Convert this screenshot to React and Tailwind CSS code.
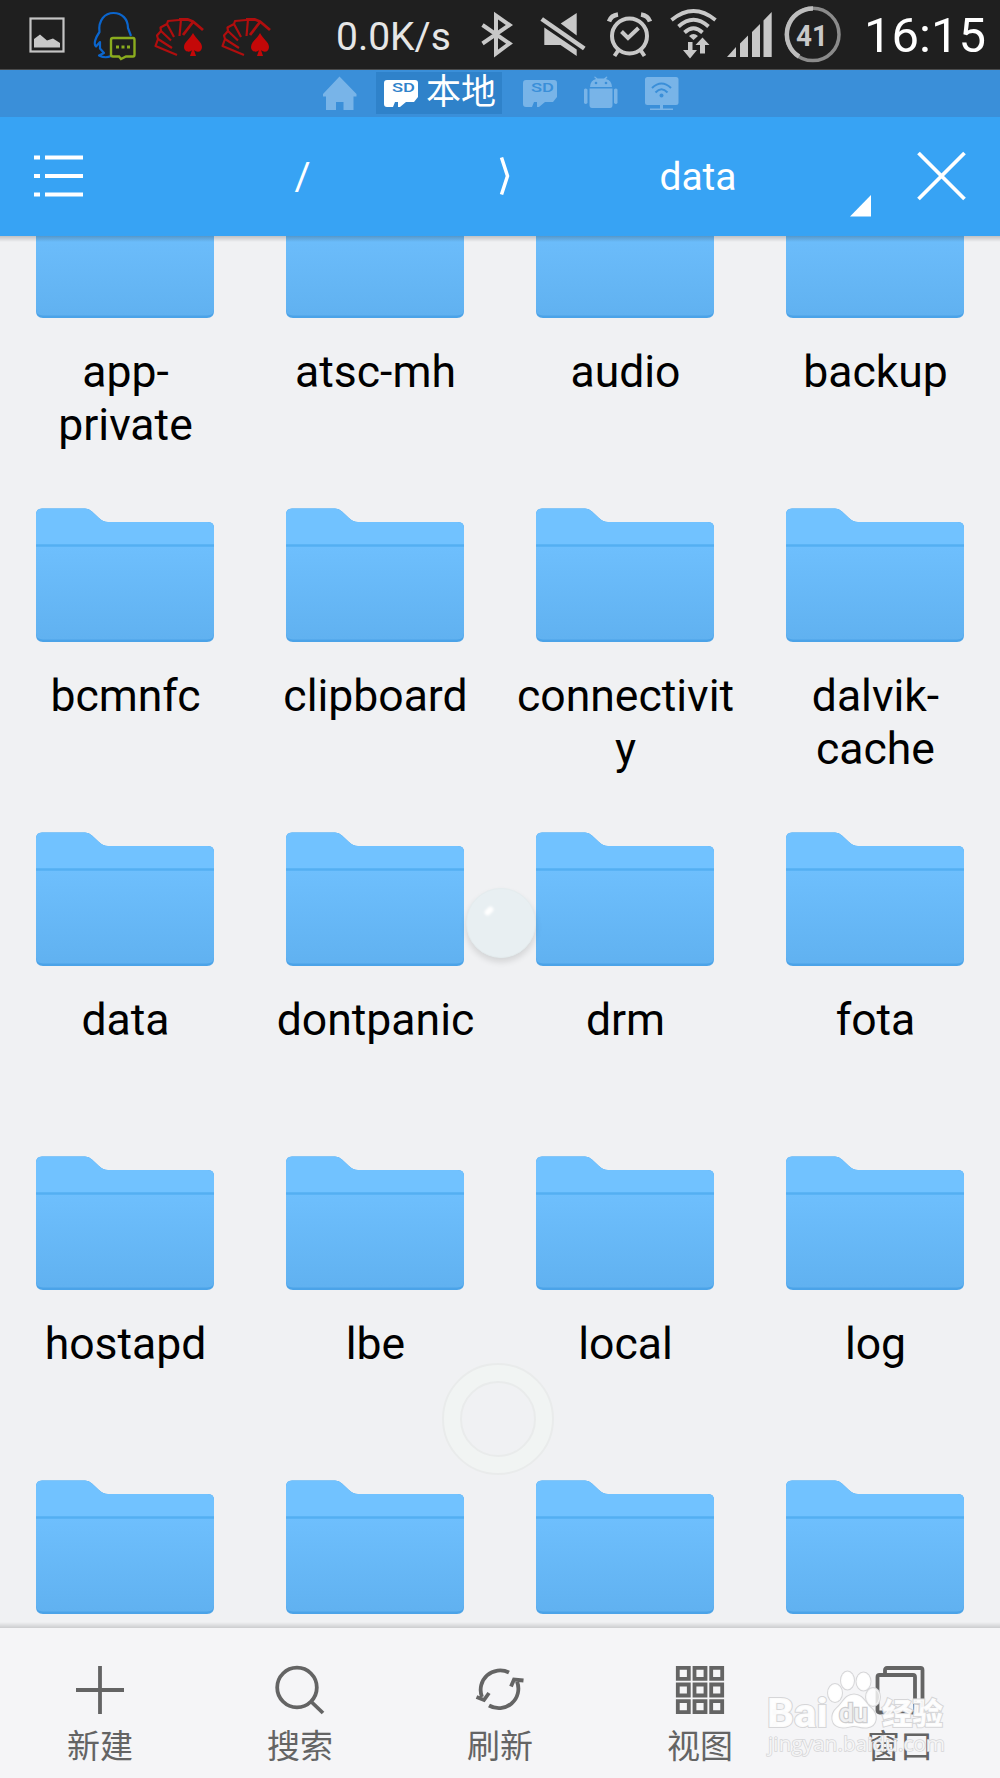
const rows = [
  ["app-private", "atsc-mh", "audio", "backup"],
  ["bcmnfc", "clipboard", "connectivity", "dalvik-cache"],
  ["data", "dontpanic", "drm", "fota"],
  ["hostapd", "lbe", "local", "log"],
  ["", "", "", ""],
];

function CardsIcon({ className }) {
  return (
    <svg className={className} width="52" height="69" viewBox="154 0 52 69" fill="none" stroke="#b00e0e" strokeWidth="2.200" strokeLinejoin="round">
      <path d="M203 30 193 21.500 188 19.500H179M193 22 183 35" strokeWidth="2.800" />
      <path d="M181 19.500 179.500 36M179 20 168 21 167 24 174 37M167 24 160.500 27.500 161 31 171 40.500M161 31 157 35.500 158 39 172 48M158 39 155.500 46 177 55" />
      <path d="M193 33C190 39 184 42 184 47 184 52 190 53 192 50L190 56H196L194 50C197 53 202 52 202 47 202 42 196 39 193 33Z" fill="#c40808" stroke="none" />
    </svg>
  );
}

function StatusBar() {
  return (
    <div className="flex h-[70px] border-b border-[#4a4a4a] bg-[#1f1f1f] text-[#e6e6e6]">
      <svg className="ml-[28px]" width="38" height="69" viewBox="28 0 38 69">
        <rect x="30.5" y="18.5" width="33" height="33" fill="none" stroke="#c4c4c4" strokeWidth="2.2" />
        <path d="M34 47.5V39L40 34.5 47 40.5 53 38.5 60 43V47.5Z" fill="#c8c8c8" />
      </svg>
      <svg className="ml-[26px]" width="46" height="69" viewBox="92 0 46 69" fill="none">
        <path d="M111 56C107 58 102 57 99 55.500L104 53 100 48.500V42L96 46.500C93 44 96 37 99.500 32C98 20 105 13 113.500 13C122 13 128 19 128 28L131 36" stroke="#0b65cc" strokeWidth="2.200" strokeLinejoin="round" />
        <path d="M113 38H133Q134.500 38 134.500 40V54.500Q134.500 56.500 133 56.500H126L121 59 119 56.500H113Q111 56.500 111 54.500V40Q111 38 113 38Z" stroke="#8aac1e" strokeWidth="2.400" fill="#1f1f1f" />
        <path d="M116 47h3M121.500 47h3M127 47h3" stroke="#8aac1e" strokeWidth="3" />
      </svg>
      <CardsIcon className="ml-[16px]" />
      <CardsIcon className="ml-[15px]" />
      <span className="ml-[63px] w-[119px] text-[39px] leading-[74px]">0.0K/s</span>
      <svg className="ml-[25px]" width="34" height="69" viewBox="480 0 34 69">
        <path d="M482.500 25 509.500 43.500 496 53.500V15.500L509.500 25 482.500 43.500" fill="none" stroke="#c8c8c8" strokeWidth="4" />
      </svg>
      <svg className="ml-[26px]" width="46" height="69" viewBox="540 0 46 69" fill="#c8c8c8">
        <path d="M560.700 23.500 576.700 13V35.500ZM544.300 27.500 576.700 49.500V56L560.500 45H544.300Z" />
        <path d="M541.700 19 584.300 48.500" stroke="#c8c8c8" strokeWidth="4.500" />
      </svg>
      <svg className="ml-[21px]" width="46" height="69" viewBox="607 0 46 69" fill="none" stroke="#c8c8c8" strokeWidth="4">
        <circle cx="629.500" cy="36" r="17.500" />
        <path d="M621.500 31.500 628 38 638.500 28M618.500 50 614.500 56M640.500 50 644.500 56" />
        <path d="M609 21.500Q611 15.500 618 14.500M650 21.500Q648 15.500 641 14.500" strokeWidth="4.500" />
      </svg>
      <svg className="ml-[17px]" width="48" height="69" viewBox="670 0 48 69" fill="#c8c8c8">
        <path d="M671.500 20Q693.500 2 715.500 20M678.500 26.500Q693.500 13 708.500 26.500M684.500 32.500Q693.500 24 702.500 32.500" fill="none" stroke="#c8c8c8" strokeWidth="3.800" />
        <path d="M689 36Q693.500 32 698 36L693.500 40ZM688 42H692.500V50H697L690 58.500 683 50H688ZM702.500 37.500 709.500 45H705V53.500H700V45H695.500Z" />
      </svg>
      <svg className="ml-[8px]" width="48" height="69" viewBox="726 0 48 69" fill="#c8c8c8">
        <path d="M727 57H736V47ZM740 57H748V35.500L740 43.500ZM752 57H760V24L752 32ZM763.500 57H771.700V12L763.500 20.500Z" />
      </svg>
      <svg className="ml-[10px]" width="58" height="69" viewBox="784 0 58 69" fill="none">
        <circle cx="812.800" cy="34.400" r="26.200" stroke="#8b8b8b" strokeWidth="3.500" />
        <path d="M813 8.500A26 26 0 0 0 799 56.500" stroke="#bdbdbd" strokeWidth="4.500" />
        <text x="796" y="45.500" textLength="32" lengthAdjust="spacingAndGlyphs" fontSize="30" fontWeight="700" fill="#c8c8c8">41</text>
      </svg>
      <span className="ml-[22px] text-[49px] leading-[71px] text-white">16:15</span>
    </div>
  );
}

function SdIcon({ color, label }) {
  return (
    <svg width="34" height="47" viewBox="384 70 34 47">
      <path d="M387 80H415Q418 80 418 83V97L414 102H406L400 107H398V102H395L393 107H387Q384 107 384 104V83Q384 80 387 80Z" fill={color} />
      <text x="392" y="92" textLength="23" lengthAdjust="spacingAndGlyphs" fontSize="12" fontWeight="500" fill={label}>SD</text>
    </svg>
  );
}

function TabStrip() {
  return (
    <div className="flex h-[47px] bg-[#3a8fd9]">
      <svg className="ml-[322px]" width="35" height="47" viewBox="322 70 35 47">
        <path d="M339.500 76.500 356.500 94V96.500H353.500V110H343.500V102H336V110H326V96.500H323V94Z" fill="#78b4e8" />
      </svg>
      <div className="mt-[2px] ml-[19px] flex h-[42px] w-[126px] items-start bg-[#2f82ca] pl-[8px]">
        <div className="-mt-[2px]">
          <SdIcon color="#ffffff" label="#2f82ca" />
        </div>
        <span className="ml-[8px] text-[35px] leading-[42px] text-white">本地</span>
      </div>
      <div className="ml-[21px]">
        <SdIcon color="#78b4e8" label="#3a8fd9" />
      </div>
      <svg className="ml-[26px]" width="35" height="47" viewBox="583 70 35 47" fill="#78b4e8">
        <path d="M590 87Q590.500 80 596 79L594 77 595 76.500 597.500 78.500H604L606.500 76.500 607.500 77 606 79Q611.500 80 612 87ZM589.500 88.500H612.500V105Q612.500 108 610 108H592Q589.500 108 589.500 105ZM584 89.500Q585.500 87.500 587.500 89.500V103Q585.500 105 584 103ZM614 89.500Q616 87.500 617.500 89.500V103Q616 105 614 103Z" />
        <circle cx="596" cy="83" r="1.300" fill="#3a8fd9" />
        <circle cx="606" cy="83" r="1.300" fill="#3a8fd9" />
      </svg>
      <svg className="ml-[27px]" width="34" height="47" viewBox="645 70 34 47">
        <path d="M647.500 77H676Q678.500 77 678.500 79.500V102.500Q678.500 105 676 105H663V108.500H673V110H650V108.500H660V105H647.500Q645 105 645 102.500V79.500Q645 77 647.500 77Z" fill="#78b4e8" />
        <path d="M652 88Q661.500 79 671 88M655.500 92.500Q661.500 86 667.500 92.500" fill="none" stroke="#3a8fd9" strokeWidth="2" />
        <circle cx="661.500" cy="95.500" r="2" fill="#3a8fd9" />
      </svg>
    </div>
  );
}

function PathBar() {
  return (
    <div className="flex h-[119px] items-center bg-[#37a3f4] text-[39px] text-white">
      <svg width="118" height="119" viewBox="0 117 118 119" stroke="#fff" strokeWidth="4.200">
        <path d="M34 157.500h6M45 157.500h38M34 176h6M45 176h38M34 194.500h6M45 194.500h38" />
      </svg>
      <span className="w-[368px] pt-[2px] pl-[1px] text-center">/</span>
      <svg width="40" height="119" viewBox="486 117 40 119" fill="none" stroke="#fff" strokeWidth="3.500">
        <path d="M501.500 157.500 507.500 176 501.500 194.500" />
      </svg>
      <span className="w-[324px] pt-[2px] pl-[20px] text-center">data</span>
      <svg width="21" height="119" viewBox="850 117 21 119">
        <path d="M850 216.500H871V195Z" fill="#fff" />
      </svg>
      <svg width="129" height="119" viewBox="871 117 129 119" stroke="#fff" strokeWidth="3.800">
        <path d="M918.500 153 964.500 199M964.500 153 918.500 199" />
      </svg>
    </div>
  );
}

function Folder({ name }) {
  return (
    <div className="flex h-[324px] flex-col items-center">
      <svg width="178" height="134" viewBox="0 0 178 134" className="shrink-0">
        <defs>
          <linearGradient id="front" x1="0" y1="38" x2="0" y2="134" gradientUnits="userSpaceOnUse">
            <stop offset="0" stopColor="#6ebffd" />
            <stop offset="1" stopColor="#60b1f0" />
          </linearGradient>
        </defs>
        <path d="M0 6.500Q0 .500 6 .500H49Q53 .500 56 3.500L63 10Q67 14 72 14H172Q178 14 178 20V127Q178 134 171 134H7Q0 134 0 127Z" fill="#4ba3e8" />
        <path d="M0 6.500Q0 .500 6 .500H49Q53 .500 56 3.500L63 10Q67 14 72 14H172Q178 14 178 20V40H0Z" fill="#71c2ff" />
        <path d="M0 37H178V125Q178 131.500 171 131.500H7Q0 131.500 0 125Z" fill="url(#front)" />
        <path d="M0 37.500H178" stroke="#54aff2" strokeWidth="2.500" />
      </svg>
      <span className="mt-[28px] w-[219px] pl-[1px] text-center text-[44.5px] leading-[53px] break-words">{name}</span>
    </div>
  );
}

function FileGrid() {
  return (
    <div className="relative h-[1392px] overflow-hidden bg-[#f0f1f3]">
      <div className="-mt-[52px] grid grid-cols-4">
        {rows.flat().map((name, i) => (
          <Folder key={i} name={name} />
        ))}
      </div>
      <div className="absolute inset-x-0 top-0 h-[6px] bg-linear-to-b from-black/20 to-transparent" />
      <div className="absolute inset-x-0 bottom-0 h-[6px] bg-linear-to-b from-transparent to-black/15" />
      {/* floating assistant ball */}
      <div className="absolute top-[652px] left-[466px] size-[70px] rounded-full border border-[#e4ecee] bg-[#e8eff2] shadow-[0_4px_6px_rgba(0,0,0,0.12)]">
        <div className="mt-[19px] ml-[17px] h-[6px] w-[10px] -rotate-45 rounded-full bg-white blur-[1px]" />
      </div>
      <div className="absolute top-[1127px] left-[442px] size-[112px] rounded-full border-2 border-[#e9ebeb] bg-[#f1f4f3] p-[16px]">
        <div className="size-full rounded-full border-2 border-[#e9ebeb] bg-[#f0f1f3]" />
      </div>
    </div>
  );
}

const actions = [
  { label: "新建", icon: <path d="M24 0V48M0 24H48" /> },
  {
    label: "搜索",
    icon: (
      <>
        <circle cx="21" cy="21.500" r="19.800" />
        <path d="M35 35.500 47 47" />
      </>
    ),
  },
  {
    label: "刷新",
    icon: <path d="M33 6.500A19.500 19.500 0 0 0 6 31M.500 31 8 34 13 27M13 39.500A19.500 19.500 0 0 0 41 15.500M35 20.500 38 13.500 47.500 14.500" />,
  },
  {
    label: "视图",
    icon: (
      <path d="M1.800 1.800h11v11h-11zM18.500 1.800h11v11h-11zM35.200 1.800h11v11h-11zM1.800 18.500h11v11h-11zM18.500 18.500h11v11h-11zM35.200 18.500h11v11h-11zM1.800 35.200h11v11h-11zM18.500 35.200h11v11h-11zM35.200 35.200h11v11h-11z" />
    ),
  },
  {
    label: "窗口",
    icon: <path d="M3.500 9H37Q39 9 39 11V44.500Q39 46.500 37 46.500H3.500Q1.500 46.500 1.500 44.500V11Q1.500 9 3.500 9ZM9 9V4Q9 2 11 2H44.500Q46.500 2 46.500 4V37.500Q46.500 39.500 44.500 39.500H40" />,
  },
];

function Watermark() {
  return (
    <svg className="absolute top-[40px] left-[762px]" width="190" height="92" viewBox="762 1668 190 92" fill="#fff" stroke="#d6d6d8" strokeWidth="2" paintOrder="stroke">
      <g fillOpacity="0.92">
        <text x="767" y="1727" textLength="61" lengthAdjust="spacingAndGlyphs" fontSize="40" fontWeight="800">Bai</text>
        <ellipse cx="835" cy="1693" rx="7" ry="9" />
        <ellipse cx="847.500" cy="1680.500" rx="6.500" ry="9" />
        <ellipse cx="863.500" cy="1681.500" rx="7" ry="9" />
        <ellipse cx="873" cy="1697" rx="7" ry="9" fillOpacity="0.8" />
        <path d="M854 1694.500C845 1694.500 843 1703 837 1708 830 1714 830 1727 843 1727.500 849 1727.500 850 1726 854 1726S861 1728 867 1727.500C878 1726 878 1714 871 1708 865 1703 863 1694.500 854 1694.500Z" />
        <text x="839" y="1722" textLength="29" lengthAdjust="spacingAndGlyphs" fontSize="26" fontWeight="500" fill="#f4f4f5" stroke="#cdcdcf" strokeWidth="2.500">du</text>
        <text x="882" y="1724" textLength="61" lengthAdjust="spacingAndGlyphs" fontSize="30" fontWeight="900">经验</text>
        <text x="768" y="1751" textLength="177" fontSize="20.500" className="font-['Open_Sans']" strokeWidth="1.500" fillOpacity="0.75">jingyan.baidu.com</text>
      </g>
    </svg>
  );
}

function ActionBar() {
  return (
    <div className="relative grid h-[150px] grid-cols-5 bg-[#f5f5f7]">
      {actions.map((action) => (
        <div key={action.label} className="flex flex-col items-center pt-[38px] text-[#646464]">
          <svg width="48" height="48" viewBox="0 0 48 48" fill="none" stroke="currentColor" strokeWidth="3.800" className="overflow-visible">
            {action.icon}
          </svg>
          <span className="mt-[8px] text-[33px] leading-[50px]">{action.label}</span>
        </div>
      ))}
      <Watermark />
    </div>
  );
}

export default function App() {
  return (
    <div className="h-[1778px] w-[1000px] overflow-hidden font-[Roboto,'Noto_Sans_CJK_SC',sans-serif] text-black">
      <StatusBar />
      <TabStrip />
      <PathBar />
      <FileGrid />
      <ActionBar />
    </div>
  );
}
